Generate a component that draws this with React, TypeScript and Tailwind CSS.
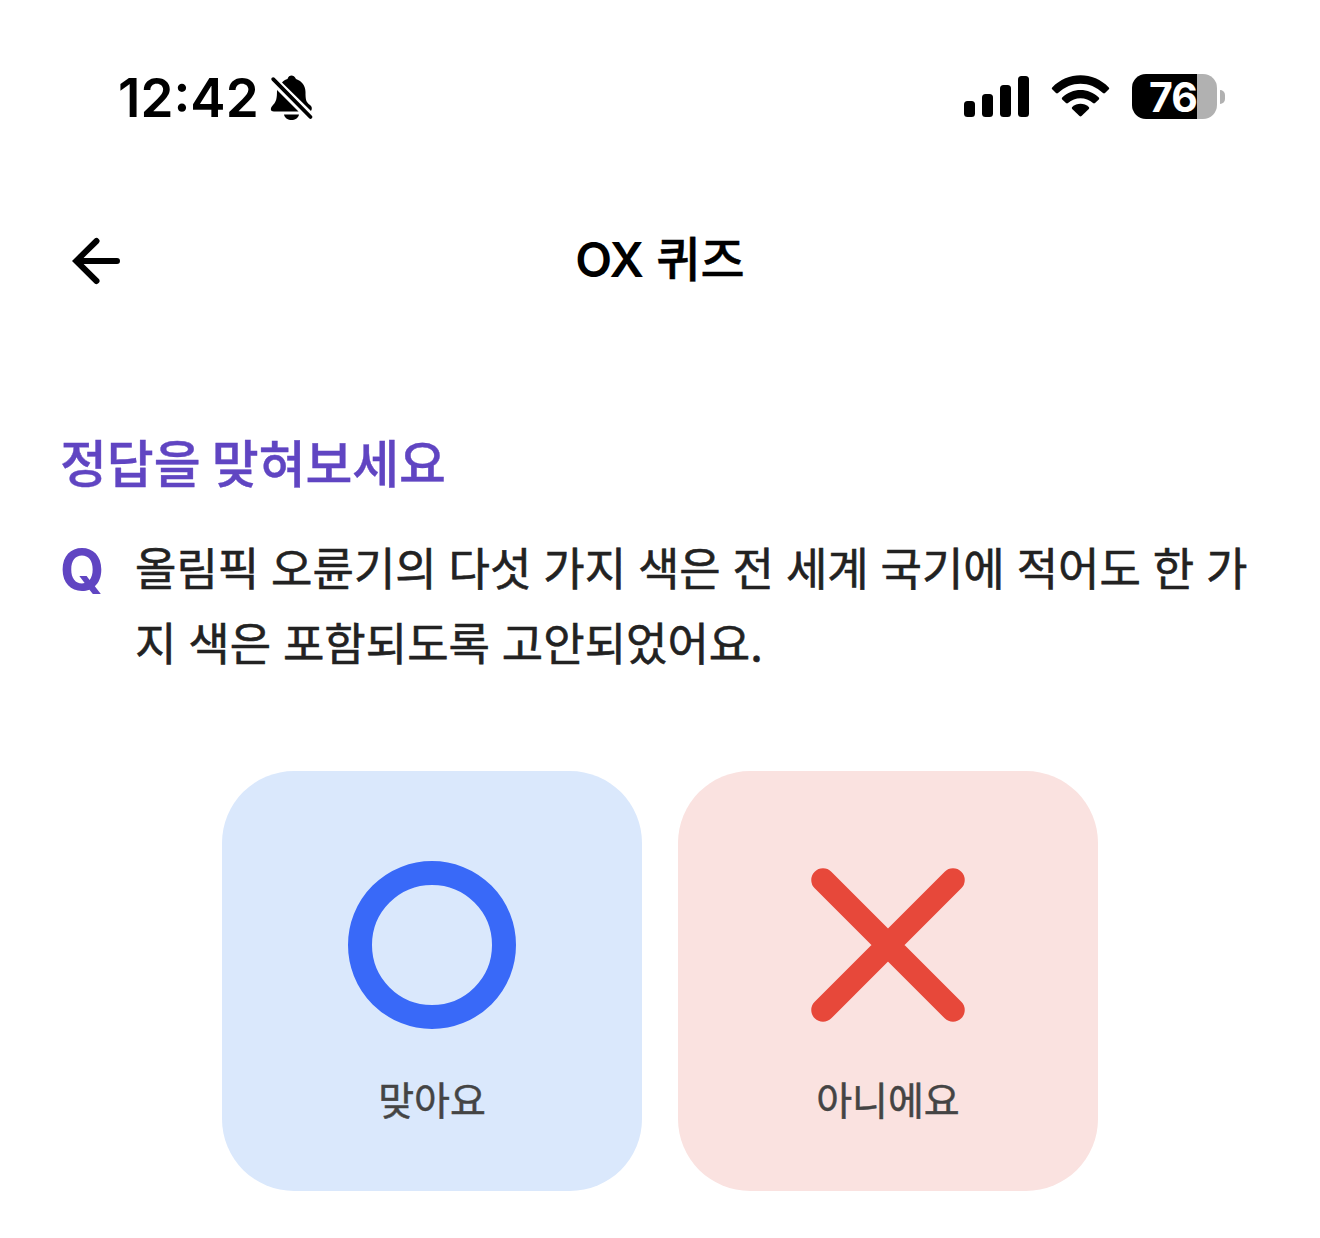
const korean = "font-['Noto_Sans_CJK_KR',sans-serif]";

function StatusBar() {
  return (
    <div className="flex h-[195px] items-start justify-between pt-[72px] pr-[95px] pl-[118px]">
      <div className="flex items-start">
        <span className="w-[152px] font-['Inter',sans-serif] text-[53px] leading-[53px] font-semibold">12:42</span>
        <svg className="mt-0.5" width="44" height="48" viewBox="0 0 44 48">
          <path d="M7 16L28.500 37.500H4C0 37.500 0 34 3 31C6.500 27.500 7 24 7 16Z" fill="#000" />
          <path d="M12 8.500C13.500 6.500 15.500 5.500 17.500 5C18 2.500 20 1.500 21.500 1.500S25 2.500 26 5C32 7 35.500 12 35.500 18C35.500 26 36 28 40 31C42 32.500 42.500 34.500 41 37Z" fill="#000" />
          <path d="M14 40.500H29C28 44.500 25 46 21.500 46S15 44.500 14 40.500Z" fill="#000" />
          <path d="M3.200 5.200L40.500 43" stroke="#000" strokeWidth="3.800" strokeLinecap="round" />
        </svg>
      </div>
      <div className="flex items-start">
        <svg className="mt-1" width="66" height="41" viewBox="0 0 66 41">
          <rect x="0" y="25" width="11" height="16" rx="3.500" />
          <rect x="18" y="18" width="11" height="23" rx="3.500" />
          <rect x="36" y="9" width="11" height="32" rx="3.500" />
          <rect x="54" y="0" width="11" height="41" rx="3.500" />
        </svg>
        <svg className="mt-[3px] ml-5" width="60" height="44" viewBox="0 0 60 44">
          <path d="M2.200 12.500C17.500 -3.800 43.500 -3.800 58.800 12.500Q59.600 13.500 58.800 14.300L55 18Q54 18.800 53 18C40 5.500 21 5.500 8 18Q7 18.800 6 18L2.200 14.300Q1.400 13.500 2.200 12.500Z" />
          <path d="M12.200 22.500C22.500 12.500 38.500 12.500 48.800 22.500Q49.700 23.500 48.800 24.400L45 28Q44 28.900 43 28C36 21.500 25 21.500 18 28Q17 28.900 16 28L12.200 24.400Q11.300 23.500 12.200 22.500Z" />
          <path d="M22.200 32C27 27.700 34 27.700 38.800 32Q39.700 33 38.800 33.900L31.500 41.100Q30.500 42 29.500 41.100L22.200 33.900Q21.300 33 22.200 32Z" />
        </svg>
        <div className="mt-0.5 ml-[22px] flex items-center">
          <div className="flex h-[45px] w-[85px] rounded-[14px] bg-[linear-gradient(to_right,#000_65px,#b1b1b1_65px)]">
            <span className="pl-[17px] font-['Inter',sans-serif] text-[41px] leading-[46px] font-bold tracking-[-1px] text-white">76</span>
          </div>
          <div className="ml-[3px] h-[14px] w-[5px] rounded-r-full bg-[#b1b1b1]" />
        </div>
      </div>
    </div>
  );
}

function Header() {
  return (
    <header className="grid h-[132px] grid-cols-[1fr_auto_1fr] items-center px-[72px]">
      <button aria-label="뒤로" className="w-[48px]">
        <svg width="48" height="48" viewBox="0 0 48 48" fill="none" stroke="#000" strokeWidth="6" strokeLinecap="round" strokeLinejoin="miter">
          <path d="M24.500 4L4.200 24L24.500 44M5 24H45" />
        </svg>
      </button>
      <h1 className="pb-0.5 font-['Inter','Noto_Sans_CJK_KR',sans-serif] text-[48px] leading-[72px] font-medium">
        <span className="font-semibold tracking-[-0.5px]">OX</span>
        <span className="[-webkit-text-stroke:0.4px_currentColor]"> 퀴즈</span>
      </h1>
    </header>
  );
}

export default function App() {
  return (
    <main className={`${korean} h-[1238px] w-[1320px] overflow-hidden bg-white text-black`}>
      <StatusBar />
      <Header />
      <section className="px-[60px] pt-[97px]">
        <h2 className="text-[51px] leading-[75px] font-medium tracking-[-0.1px] text-[#6045c2] [-webkit-text-stroke:0.4px_currentColor]">정답을 맞혀보세요</h2>
        <div className="mt-[30px] flex h-[150px] text-[45px] leading-[75px] text-[#222]">
          <span className="w-[75px] pt-[3px] font-['Inter',sans-serif] text-[57px] font-bold text-[#6045c2]">Q</span>
          <p className="whitespace-nowrap [word-spacing:1.8px] [-webkit-text-stroke:0.6px_currentColor]">
            올림픽 오륜기의 다섯 가지 색은 전 세계 국기에 적어도 한 가<br />지 색은 포함되도록 고안되었어요.
          </p>
        </div>
      </section>
      <div className="mt-[92px] flex justify-center gap-9 text-[39px] leading-[60px] text-[#444] [-webkit-text-stroke:0.5px_currentColor]">
        <button className="flex h-[420px] w-[420px] flex-col items-center rounded-[72px] bg-[#dae8fc] pt-[90px]">
          <span className="h-[168px] w-[168px] rounded-full border-[24px] border-[#3969f8]" />
          <span className="mt-[39px]">맞아요</span>
        </button>
        <button className="flex h-[420px] w-[420px] flex-col items-center rounded-[72px] bg-[#fae2e0] pt-[90px]">
          <svg width="168" height="168" viewBox="0 0 168 168" fill="none" stroke="#e7483a" strokeWidth="23.500" strokeLinecap="round">
            <path d="M19 19L149 149M149 19L19 149" />
          </svg>
          <span className="mt-[39px]">아니에요</span>
        </button>
      </div>
    </main>
  );
}
